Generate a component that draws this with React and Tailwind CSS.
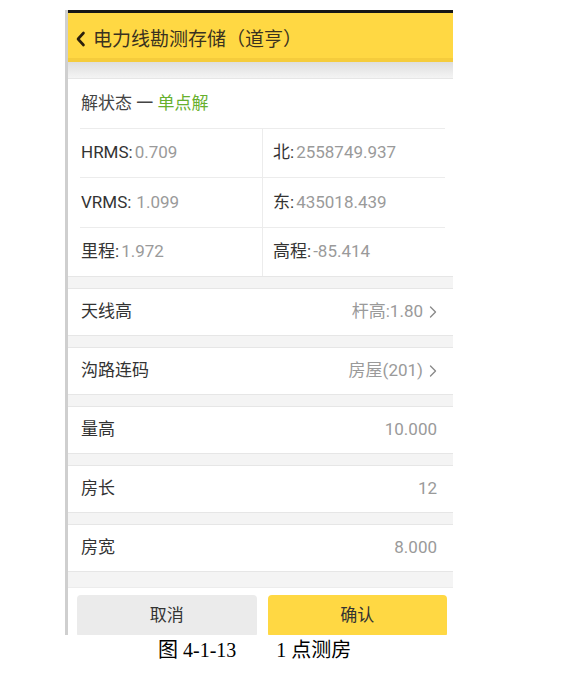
import React from "react";

const SANS = { fontFamily: '"Roboto", "Noto Sans CJK SC", sans-serif' };

function Chevron() {
  return (
    <svg width="8" height="12" viewBox="0 0 8 12" className="ml-[6px]">
      <path d="M1.5 1 L6.5 6 L1.5 11" fill="none" stroke="#8a8a8a" strokeWidth="1.4" strokeLinecap="round" strokeLinejoin="round" />
    </svg>
  );
}

function Item({ label, value, chevron }) {
  return (
    <div className="bg-white border-y border-[#e6e6e6] h-[48px] flex items-center pl-[13px] pr-[16px] shrink-0">
      <span className="text-[17px] text-[#333333] flex-1">{label}</span>
      <span className="text-[17px] text-[#9a9a9a]">{value}</span>
      {chevron && <Chevron />}
    </div>
  );
}

function Cell({ label, value, right, gap }) {
  return (
    <div className={"flex items-center text-[17px] " + (right ? "pl-[10px] border-l border-[#ececec]" : "pl-[1px]")}>
      <span className="text-[#333333]">{label}</span>
      <span className={"text-[#9a9a9a] whitespace-pre " + (gap ? "ml-[5px]" : "ml-[2px]")}>{value}</span>
    </div>
  );
}

export default function App() {
  return (
    <div className="w-[564px] h-[673px] bg-white overflow-hidden" style={SANS}>
      <div className="pt-[10px] pl-[65px]">
        <div className="w-[388px] h-[625px] border-l-[3px] border-[#cfcfcf] overflow-hidden bg-[#f4f4f4] flex flex-col">
          <div className="h-[3px] bg-[#161616] shrink-0" />
          <div className="h-[45px] bg-[#ffd843] flex items-center pl-[7px] pt-[7px] shrink-0">
            <svg width="12" height="16" viewBox="0 0 12 16">
              <path d="M8.5 2 L3 8 L8.5 14" fill="none" stroke="#2b1f0c" strokeWidth="2.6" strokeLinecap="round" strokeLinejoin="round" />
            </svg>
            <span className="ml-[6px] text-[19px] text-[#3a3220] leading-none">电力线勘测存储（道亨）</span>
          </div>
          <div className="h-[4px] bg-[#f5cc3c] shrink-0" />
          <div className="h-[16px] bg-gradient-to-b from-[#dedede] to-[#f4f4f4] shrink-0" />

          <div className="bg-white border-y border-[#e6e6e6] shrink-0">
            <div className="h-[49px] flex items-center pl-[13px] text-[17px]">
              <span className="whitespace-pre">
                <span className="text-[#444444]">{"解状态 一 "}</span>
                <span className="text-[#67b02d]">单点解</span>
              </span>
            </div>
            <div className="ml-[12px] mr-[8px] grid grid-cols-[182px_1fr] h-[49px] border-t border-[#ececec]">
              <Cell label="HRMS:" value="0.709" />
              <Cell label="北:" value="2558749.937" right />
            </div>
            <div className="ml-[12px] mr-[8px] grid grid-cols-[182px_1fr] h-[50px] border-t border-[#ececec]">
              <Cell label="VRMS:" value="1.099" gap />
              <Cell label="东:" value="435018.439" right />
            </div>
            <div className="ml-[12px] mr-[8px] grid grid-cols-[182px_1fr] h-[49px] border-t border-[#ececec]">
              <Cell label="里程:" value="1.972" />
              <Cell label="高程:" value="-85.414" right />
            </div>
          </div>

          <div className="h-[11px] shrink-0" />
          <Item label="天线高" value="杆高:1.80" chevron />
          <div className="h-[11px] shrink-0" />
          <Item label="沟路连码" value="房屋(201)" chevron />
          <div className="h-[11px] shrink-0" />
          <Item label="量高" value="10.000" />
          <div className="h-[11px] shrink-0" />
          <Item label="房长" value="12" />
          <div className="h-[11px] shrink-0" />
          <Item label="房宽" value="8.000" />
          <div className="h-[15px] shrink-0" />

          <div className="flex-1 bg-white border-t border-[#ececec] pt-[7px] pl-[9px] pr-[6px] flex gap-[11px]">
            <div className="flex-1 h-[42px] rounded-[4px] bg-[#ebebeb] flex items-center justify-center text-[17px] text-[#333333]">取消</div>
            <div className="flex-1 h-[42px] rounded-[4px] bg-[#ffd843] flex items-center justify-center text-[17px] text-[#333333]">确认</div>
          </div>
        </div>
        <div
          className="ml-[93px] mt-[3px] h-[24px] leading-[24px] text-[20px] text-black whitespace-pre"
          style={{ fontFamily: '"Liberation Serif", "Noto Sans CJK SC", serif' }}
        >
          图 4-1-13　　1 点测房
        </div>
      </div>
    </div>
  );
}
